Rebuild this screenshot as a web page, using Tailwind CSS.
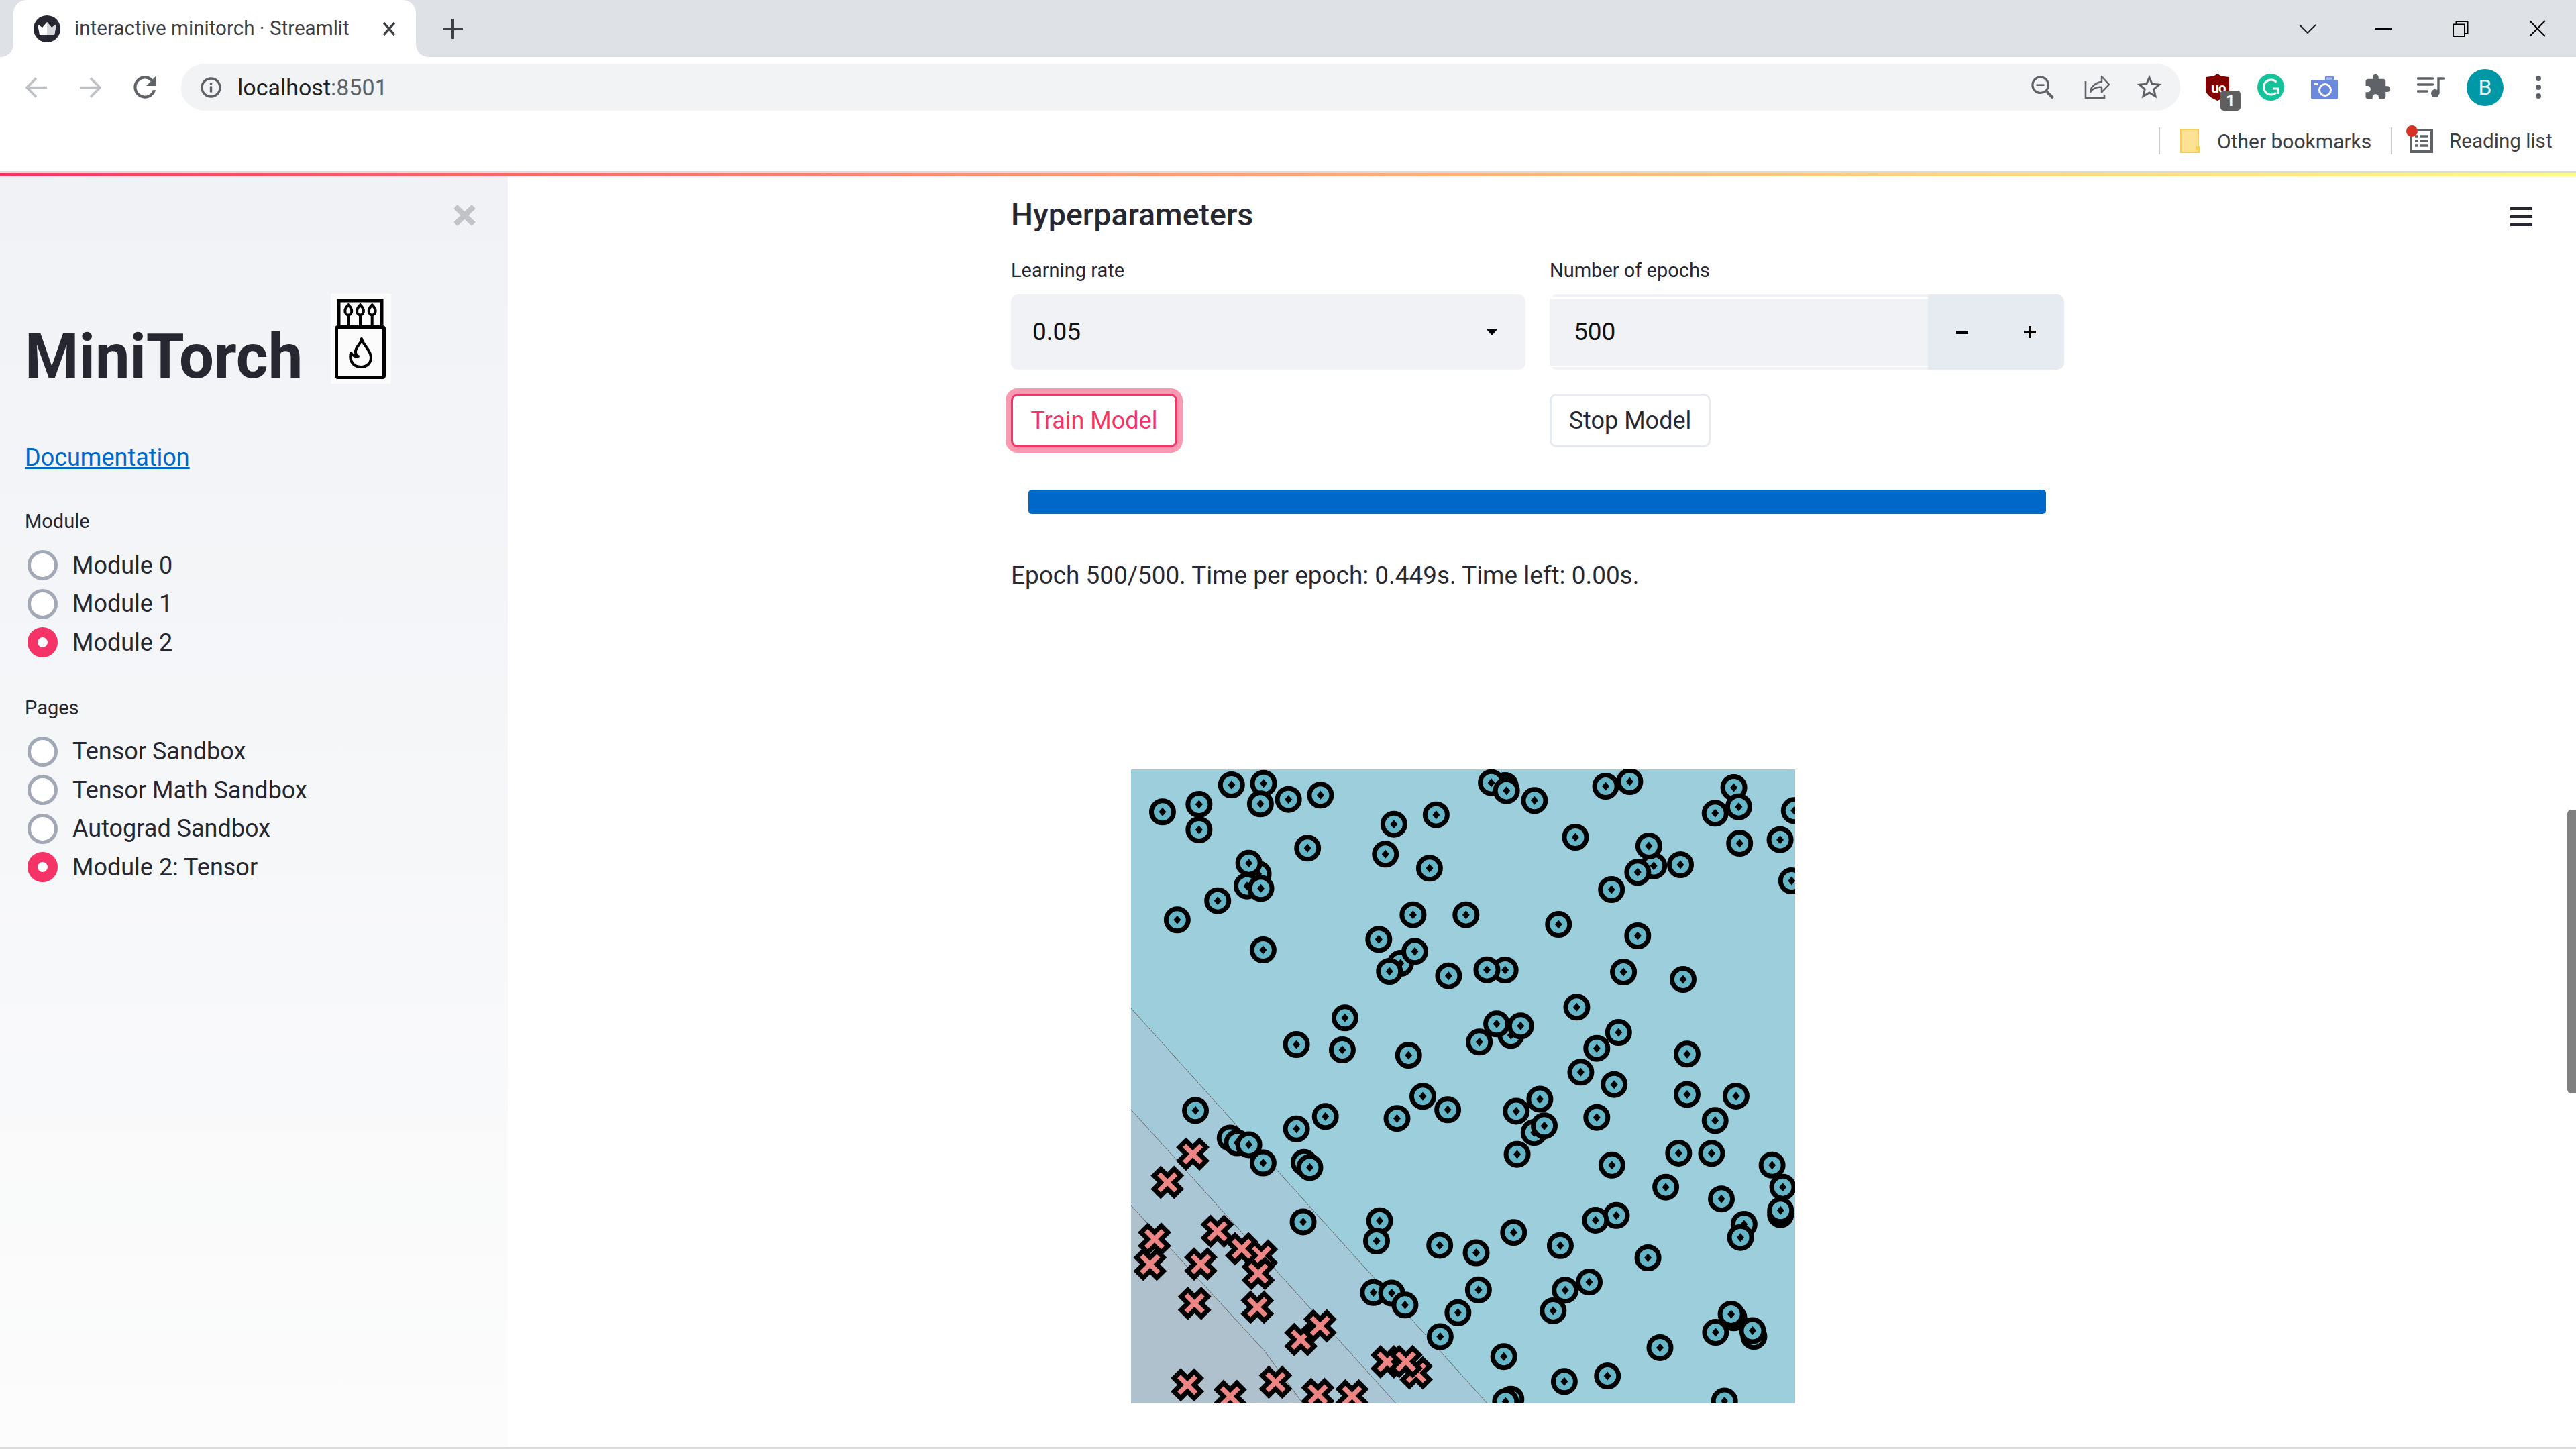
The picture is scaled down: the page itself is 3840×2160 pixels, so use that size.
<!DOCTYPE html>
<html lang="en">
<head>
  <meta charset="UTF-8" />
  <title>interactive minitorch · Streamlit</title>
  <script src="https://cdn.jsdelivr.net/npm/@tailwindcss/browser@4"></script>
</head>
<body class="bg-white font-['Roboto',sans-serif] text-[#262730]">
<div class="w-[3840px] h-[2160px] flex flex-col overflow-hidden">

  <!-- tab strip -->
  <div class="h-[85px] bg-[#dee1e6] flex items-center shrink-0">
    <div class="relative ml-[20px] w-[600px] h-[85px] bg-white rounded-t-[20px] flex items-center">
      <svg class="absolute left-[-20px] bottom-0" width="20" height="20" viewBox="0 0 20 20"><path d="M20 0v20H0C12 20 20 12 20 0z" fill="#fff"/></svg>
      <svg class="absolute right-[-20px] bottom-0" width="20" height="20" viewBox="0 0 20 20"><path d="M0 0v20h20C8 20 0 12 0 0z" fill="#fff"/></svg>
      <svg class="ml-[30px] shrink-0" width="40" height="40" viewBox="0 0 40 40">
        <circle cx="20" cy="20" r="20" fill="#262730"/>
        <path d="M6 13l7 5 7-8 7 8 7-5-3 16H9z" fill="#fff"/>
        <path d="M20 10l7 8 7-5-3 16H20z" fill="#d5d6da"/>
      </svg>
      <span class="ml-[21px] w-[409px] text-[29.6px] text-[#3c4043] whitespace-nowrap">interactive minitorch · Streamlit</span>
      <svg class="ml-[50px]" width="20" height="20" viewBox="0 0 20 20"><path d="M2 1l16 18M18 1L2 19" stroke="#3c4043" stroke-width="3.4" fill="none"/></svg>
    </div>
    <svg class="ml-[40px]" width="30" height="30" viewBox="0 0 30 30"><path d="M15 1v28M1 15h28" stroke="#3c4043" stroke-width="4" stroke-linecap="round"/></svg>
    <svg class="ml-[2737px]" width="26" height="14" viewBox="0 0 26 14"><path d="M1 1l12 12L25 1" stroke="#202124" stroke-width="2" fill="none"/></svg>
    <svg class="ml-[87px]" width="25" height="3" viewBox="0 0 25 3"><path d="M0 1.5h25" stroke="#000" stroke-width="3"/></svg>
    <svg class="ml-[91px]" width="24" height="24" viewBox="0 0 24 24"><path d="M5.500 5.500V1h17v18h-4.500M1 5.500h17V23H1z" stroke="#000" stroke-width="2" fill="none"/></svg>
    <svg class="ml-[90px]" width="25" height="25" viewBox="0 0 25 25"><path d="M1 1l23 23M24 1L1 24" stroke="#000" stroke-width="2" fill="none"/></svg>
  </div>

  <!-- toolbar -->
  <div class="h-[90px] bg-white flex items-center shrink-0">
    <svg class="ml-[38px]" width="33" height="31" viewBox="0 0 33 31"><path d="M32 15.500H3M16 1.500l-14 14 14 14" stroke="#bdc1c6" stroke-width="3.600" fill="none"/></svg>
    <svg class="ml-[47px]" width="33" height="31" viewBox="0 0 33 31"><path d="M1 15.500h29M17 1.500l14 14-14 14" stroke="#bdc1c6" stroke-width="3.600" fill="none"/></svg>
    <svg class="ml-[40px]" width="50" height="50" viewBox="0 0 24 24"><path d="M17.650 6.350C16.200 4.900 14.210 4 12 4c-4.420 0-7.990 3.580-7.990 8s3.570 8 7.990 8c3.730 0 6.840-2.550 7.730-6h-2.080c-.82 2.330-3.040 4-5.650 4-3.310 0-6-2.690-6-6s2.690-6 6-6c1.660 0 3.140.69 4.220 1.780L13 11h7V4l-2.350 2.350z" fill="#5f6368"/></svg>
    <div class="ml-[29px] w-[2980px] h-[70px] rounded-full bg-[#f1f3f4] flex items-center pl-[29px] pr-[24px]">
      <svg width="31" height="31" viewBox="0 0 31 31"><circle cx="15.500" cy="15.500" r="13.500" stroke="#5f6368" stroke-width="3.400" fill="none"/><path d="M15.500 13.500v9M15.500 8v3.400" stroke="#5f6368" stroke-width="3.400"/></svg>
      <span class="ml-[24px] text-[34px] text-[#202124] whitespace-nowrap">localhost<span class="text-[#5f6368]">:8501</span></span>
      <svg class="ml-auto" width="35" height="34" viewBox="0 0 35 34"><circle cx="14.700" cy="13.700" r="11.800" stroke="#5f6368" stroke-width="3.200" fill="none"/><path d="M8.500 13.700h12" stroke="#5f6368" stroke-width="2.600"/><path d="M24 23.500l9.500 9.500" stroke="#5f6368" stroke-width="4.200"/></svg>
      <svg class="ml-[45px]" width="38" height="36" viewBox="0 0 38 36"><path d="M2 9v25h28v-5" stroke="#5f6368" stroke-width="2.600" fill="none"/><path d="M9 25C10 16 18 11 26 10V2l11 12-11 11.500V18C19 17 13 20 9 25z" stroke="#5f6368" stroke-width="2.400" fill="none" stroke-linejoin="round"/></svg>
      <svg class="ml-[37px]" width="44" height="44" viewBox="0 0 24 24"><path d="M22 9.240l-7.190-.62L12 2 9.190 8.630 2 9.240l5.460 4.730L5.820 21 12 17.270 18.180 21l-1.630-7.030L22 9.240zM12 15.400l-3.760 2.270 1-4.280-3.320-2.880 4.380-.38L12 6.100l1.710 4.040 4.380.38-3.320 2.880 1 4.280L12 15.400z" fill="#5f6368"/></svg>
    </div>

    <div class="relative ml-[38px] w-[35px] h-[40px]">
      <svg width="35" height="40" viewBox="0 0 35 40"><path d="M17.500 0L23 3.500 35 5v18c0 8-8 13-17.500 17C8 36 0 31 0 23V5l12-1.500z" fill="#800000"/></svg>
      <span class="absolute left-[8px] top-[9px] text-[21px] leading-[24px] font-bold text-white tracking-[-1px]">uo</span>
      <span class="absolute left-[22px] top-[25px] w-[30px] h-[30px] rounded-[5px] bg-[#5f5f5f] text-white text-[24px] leading-[30px] font-bold text-center">1</span>
    </div>
    <svg class="ml-[42px]" width="40" height="40" viewBox="0 0 40 40"><circle cx="20" cy="20" r="20" fill="#15c39a"/><path d="M28.500 12.500A11 11 0 1 0 28 28M23 22h8v8" stroke="#fff" stroke-width="3" fill="none"/></svg>
    <svg class="ml-[40px]" width="40" height="35" viewBox="0 0 40 35"><path d="M0 8a2 2 0 0 1 2-2h19V2a2 2 0 0 1 2-2h9a2 2 0 0 1 2 2v4h4a2 2 0 0 1 2 2v25a2 2 0 0 1-2 2H2a2 2 0 0 1-2-2z" fill="#6b8ade"/><path d="M23 2.500h8.500V6H23z" fill="#a5b8ea"/><circle cx="21" cy="21" r="8.500" stroke="#fff" stroke-width="3" fill="none"/><rect x="5" y="11" width="5" height="3" fill="#fff"/></svg>
    <svg class="ml-[38px]" width="42" height="42" viewBox="0 0 24 24"><path d="M20.500 11H19V7c0-1.100-.9-2-2-2h-4V3.500C13 2.120 11.880 1 10.500 1S8 2.120 8 3.500V5H4c-1.100 0-1.990.9-1.990 2v3.800H3.500c1.490 0 2.700 1.210 2.700 2.700s-1.210 2.700-2.700 2.700H2V20c0 1.100.9 2 2 2h3.800v-1.500c0-1.490 1.210-2.700 2.700-2.700 1.490 0 2.700 1.210 2.700 2.700V22H17c1.100 0 2-.9 2-2v-4h1.500c1.380 0 2.500-1.120 2.500-2.500S21.880 11 20.500 11z" fill="#5f6368"/></svg>
    <svg class="ml-[38px]" width="41" height="30" viewBox="0 0 41 30"><path d="M1.500 2h22M1.500 11h22M1.500 21h14" stroke="#5f6368" stroke-width="3.400" stroke-linecap="round" fill="none"/><path d="M32 24V2h7.500" stroke="#5f6368" stroke-width="3.400" stroke-linecap="round" fill="none"/><circle cx="27" cy="24" r="6" fill="#5f6368"/></svg>
    <div class="ml-[33px] w-[55px] h-[55px] rounded-full bg-[#0097a7] text-[#e0f4f6] text-[32px] leading-[55px] text-center">B</div>
    <svg class="ml-[48px]" width="8" height="34" viewBox="0 0 8 34"><circle cx="4" cy="4" r="4" fill="#5f6368"/><circle cx="4" cy="17" r="4" fill="#5f6368"/><circle cx="4" cy="30" r="4" fill="#5f6368"/></svg>
  </div>

  <!-- bookmarks bar -->
  <div class="h-[80px] bg-white flex items-center pb-[10px] shrink-0">
    <div class="ml-[3218px] w-[2px] h-[40px] bg-[#c8cacd]"></div>
    <svg class="ml-[30px]" width="30" height="36" viewBox="0 0 30 36"><path d="M1 1h26v30h-2v-4h3v8H1z" fill="#fde293" stroke="#f9cf50" stroke-width="2"/></svg>
    <span class="ml-[25px] w-[231px] text-[30px] text-[#3c4043] whitespace-nowrap">Other bookmarks</span>
    <div class="ml-[28px] w-[2px] h-[40px] bg-[#c8cacd]"></div>
    <div class="relative ml-[26px] w-[35px] h-[36px]">
      <svg width="35" height="36" viewBox="0 0 35 36"><path d="M2 2h31v32H2z" stroke="#5f6368" stroke-width="4" fill="none"/><path d="M8 11h4M15 11h12M8 18h4M15 18h12M8 25h4M15 25h12" stroke="#5f6368" stroke-width="3.500"/></svg>
      <div class="absolute left-[-5px] top-[-5px] w-[17px] h-[17px] rounded-full bg-[#d93025]"></div>
    </div>
    <span class="ml-[24px] text-[29.6px] text-[#3c4043] whitespace-nowrap">Reading list</span>
  </div>

  <div class="h-[3px] bg-[#dadce0] shrink-0"></div>
  <div class="h-[5px] bg-linear-to-r from-[#f63366] to-[#fffd80] shrink-0"></div>

  <!-- app -->
  <div class="flex flex-1 min-h-0">
    <aside class="w-[757px] shrink-0 bg-linear-to-b from-[#f0f2f6] to-[#fcfcfc] px-[37px] pt-[42px]">
      <div class="flex justify-end pr-[11px]">
        <svg width="33" height="32" viewBox="0 0 33 32"><path d="M3 3l27 26M30 3L3 29" stroke="#c1c3c8" stroke-width="8"/></svg>
      </div>
      <div class="mt-[101px] h-[134px] flex items-end">
        <h1 class="w-[456px] -mb-[10px] text-[92px] leading-[100px] font-bold whitespace-nowrap">MiniTorch</h1>
        <svg class="bg-[#fbfbfb] shrink-0" width="90" height="134" viewBox="0 0 90 134">
          <path d="M12 47V10h64v37" stroke="#000" stroke-width="5" fill="none"/>
          <rect x="8.500" y="49.500" width="71" height="75" rx="2" stroke="#000" stroke-width="5" fill="none"/>
          <path d="M26.300 33v14M44 33v14M61.700 33v14" stroke="#000" stroke-width="4"/>
          <path d="M26.300 16.500c-3 3-5 6-5 9 0 3 2 6 5 6s5-3 5-6c0-3-2-6-5-9z" stroke="#000" stroke-width="4" fill="none"/>
          <path d="M44 16.500c-3 3-5 6-5 9 0 3 2 6 5 6s5-3 5-6c0-3-2-6-5-9z" stroke="#000" stroke-width="4" fill="none"/>
          <path d="M61.700 16.500c-3 3-5 6-5 9 0 3 2 6 5 6s5-3 5-6c0-3-2-6-5-9z" stroke="#000" stroke-width="4" fill="none"/>
          <path d="M46 67c1 6-10 12-9 20 0 4 3 6 4 6-5 1-8-1-11-5-3 12 4 21 15 21 9 0 15-6 15-14 0-11-11-17-14-28z" stroke="#000" stroke-width="4" fill="none" stroke-linejoin="round"/>
        </svg>
      </div>
      <a class="block mt-[85px] h-[50px] leading-[50px] text-[36px] text-[#0068c9] underline decoration-[3px]" href="#">Documentation</a>

      <p class="mt-[50px] h-[40px] leading-[40px] text-[29px]">Module</p>
      <div class="mt-[17px]">
        <div class="flex items-center h-[57.5px]"><span class="ml-[4px] w-[45px] h-[45px] rounded-full border-[5px] border-[#a3a8b8] bg-white"></span><span class="ml-[22px] text-[36px]">Module 0</span></div>
        <div class="flex items-center h-[57.5px]"><span class="ml-[4px] w-[45px] h-[45px] rounded-full border-[5px] border-[#a3a8b8] bg-white"></span><span class="ml-[22px] text-[36px]">Module 1</span></div>
        <div class="flex items-center h-[57.5px]"><span class="ml-[4px] w-[45px] h-[45px] rounded-full border-[15px] border-[#f63366] bg-white"></span><span class="ml-[22px] text-[36px]">Module 2</span></div>
      </div>

      <p class="mt-[48px] h-[40px] leading-[40px] text-[29px]">Pages</p>
      <div class="mt-[17px]">
        <div class="flex items-center h-[57.5px]"><span class="ml-[4px] w-[45px] h-[45px] rounded-full border-[5px] border-[#a3a8b8] bg-white"></span><span class="ml-[22px] text-[36px]">Tensor Sandbox</span></div>
        <div class="flex items-center h-[57.5px]"><span class="ml-[4px] w-[45px] h-[45px] rounded-full border-[5px] border-[#a3a8b8] bg-white"></span><span class="ml-[22px] text-[36px]">Tensor Math Sandbox</span></div>
        <div class="flex items-center h-[57.5px]"><span class="ml-[4px] w-[45px] h-[45px] rounded-full border-[5px] border-[#a3a8b8] bg-white"></span><span class="ml-[22px] text-[36px]">Autograd Sandbox</span></div>
        <div class="flex items-center h-[57.5px]"><span class="ml-[4px] w-[45px] h-[45px] rounded-full border-[15px] border-[#f63366] bg-white"></span><span class="ml-[22px] text-[36px]">Module 2: Tensor</span></div>
      </div>
    </aside>

    <main class="relative flex-1 pl-[750px] pt-[27px] overflow-hidden">
      <div class="absolute left-[2985px] top-[46px] w-[33px] flex flex-col gap-[8px]">
        <div class="h-[4px] bg-[#262730]"></div>
        <div class="h-[4px] bg-[#262730]"></div>
        <div class="h-[4px] bg-[#262730]"></div>
      </div>
      <div class="absolute right-0 top-[944px] w-[13px] h-[423px] rounded-l-[6px] bg-[#808080]"></div>

      <h2 class="h-[60px] leading-[60px] text-[46.5px] font-medium">Hyperparameters</h2>

      <div class="flex gap-[36px] mt-[33px]">
        <div class="w-[767px]">
          <label class="block h-[40px] leading-[40px] text-[29px]">Learning rate</label>
          <div class="mt-[16px] h-[112px] rounded-[10px] bg-[#f0f2f6] flex items-center pl-[32px] pr-[42px]">
            <span class="text-[37px] text-[#111]">0.05</span>
            <svg class="ml-auto" width="16" height="9" viewBox="0 0 16 9"><path d="M0 0h16L8 9z" fill="#000"/></svg>
          </div>
        </div>
        <div class="w-[767px]">
          <label class="block h-[40px] leading-[40px] text-[29px]">Number of epochs</label>
          <div class="mt-[16px] h-[112px] flex">
            <div class="w-[564px] rounded-l-[10px] bg-[#f0f2f6] py-[4px]">
              <div class="h-[104px] border-y-2 border-white flex items-center pl-[36px] text-[37px] text-[#111]">500</div>
            </div>
            <div class="flex-1 rounded-r-[10px] bg-[#e6eaf1] flex items-center text-black">
              <svg class="ml-[42px]" width="18" height="5" viewBox="0 0 18 5"><path d="M0 0h18v5H0z" fill="#000"/></svg>
              <svg class="ml-[83px]" width="18" height="18" viewBox="0 0 18 18"><path d="M7 0h4v7h7v4h-7v7H7v-7H0V7h7z" fill="#000"/></svg>
            </div>
          </div>
        </div>
      </div>

      <div class="flex gap-[36px] mt-[36px]">
        <div class="w-[767px]">
          <button class="w-[248px] h-[80px] rounded-[10px] border-[3px] border-[#f63366] ring-8 ring-[#f63366]/50 bg-white text-[#f63366] text-[36px]">Train Model</button>
        </div>
        <button class="w-[240px] h-[80px] rounded-[10px] border-[3px] border-[#e6eaf1] bg-white text-[36px]">Stop Model</button>
      </div>

      <div class="ml-[26px] mt-[63px] w-[1517px] h-[36px] rounded-[5px] bg-[#0068c9]"></div>

      <p class="mt-[67px] h-[50px] leading-[50px] text-[36.9px] whitespace-nowrap">Epoch 500/500. Time per epoch: 0.449s. Time left: 0.00s.</p>

      <svg id="plot" class="ml-[179px] mt-[264px] block" width="990" height="945" viewBox="1686 1147 990 945">
        <defs>
          <g id="ring">
            <circle r="16.500" fill="#66b6c7" stroke="#000" stroke-width="7"/>
            <path d="M0-6.500L5.500 0 0 6.500-5.500 0z" fill="#000"/>
          </g>
          <path id="cross" d="M-10-20L0-10 10-20 20-10 10 0 20 10 10 20 0 10-10 20-20 10-10 0-20-10z" fill="#ee8585" stroke="#000" stroke-width="7"/>
        </defs>
        <rect x="1686" y="1147" width="990" height="945" fill="#9ccedc"/>
        <path d="M1686 1503L2217 2092H1686z" fill="#a4c9d9"/>
        <path d="M1686 1654L2081 2092H1686z" fill="#aac5d4"/>
        <path d="M1686 1797L1885 2014 1942 2092H1686z" fill="#b0c1ce"/>
        <path d="M1686 1503L2217 2092M1686 1654L2081 2092M1686 1797L1885 2014 1942 2092" stroke="#666" stroke-width="1" fill="none"/>
      </svg>
      <div class="h-[40px]"></div>
    </main>
  </div>
  <div class="h-[3px] bg-[#dddddd] shrink-0"></div>
</div>

<script>
  // point positions read off the plot, in two sets of scaled coordinates
  const ringsTop = [[880,123],[325,518],[300,572],[1214,482],[645,918],[880,948],[893,1240],[265,120],[337,113],[110,241],[192,207],[192,321],[330,205],[393,185],[465,166],[849,110],[883,146],[946,190],[1106,126],[1160,105],[1394,132],[1352,247],[1405,218],[1530,235],[630,296],[725,254],[1038,354],[1407,381],[1498,365],[1524,549],[436,403],[611,430],[710,493],[1203,393],[1178,511],[1274,477],[1119,588],[304,470],[331,583],[234,638],[143,724],[336,858],[673,701],[792,701],[1000,744],[1178,795],[596,811],[677,865],[620,954],[753,974],[839,947],[1146,957],[1280,990],[1041,1114],[520,1162],[861,1189],[915,1198],[822,1270],[1135,1227],[1086,1298],[411,1281],[514,1305],[663,1329],[1289,1324],[1050,1405],[1125,1460]];
  const ringsLow = [[262,270],[278,290],[428,372],[945,247],[1499,590],[1417,630],[1394,1020],[1439,1098],[893,1360],[695,96],[751,152],[637,188],[905,158],[958,108],[1086,184],[1289,88],[1399,95],[1352,197],[184,155],[476,180],[411,232],[304,298],[336,374],[441,393],[968,219],[907,338],[1120,383],[1270,333],[1344,334],[1480,383],[1241,475],[1504,475],[1366,524],[1499,572],[1130,593],[1083,613],[1409,685],[426,620],[598,615],[591,700],[733,718],[815,749],[899,664],[1004,719],[1201,770],[584,915],[625,917],[655,967],[820,904],[1069,871],[1015,905],[988,991],[774,999],[734,1099],[1388,1005],[1353,1081],[1436,1074],[1228,1145],[877,1182],[1013,1286],[1110,1263],[881,1370],[1373,1368]];
  const crosses = [[332,762],[680,1250],[178,337],[121,455],[233,659],[92,692],[82,797],[288,732],[325,835],[196,796],[182,960],[323,976],[421,1111],[464,1054],[615,1204],[657,1203],[166,1300],[262,1348],[364,1289],[459,1340],[536,1346]];
  const plot = document.getElementById("plot");
  function put(id, x, y) {
    const u = document.createElementNS("http://www.w3.org/2000/svg", "use");
    u.setAttribute("href", "#" + id);
    u.setAttribute("x", x);
    u.setAttribute("y", y);
    plot.appendChild(u);
  }
  ringsTop.forEach(p => put("ring", 1660 + p[0] / 1.5077, 1130 + p[1] / 3));
  ringsLow.forEach(p => put("ring", 1660 + p[0] / 1.5077, 1600 + p[1] / 2.8));
  crosses.forEach(p => put("cross", 1660 + p[0] / 1.5077, 1600 + p[1] / 2.8));
</script>
</body>
</html>
